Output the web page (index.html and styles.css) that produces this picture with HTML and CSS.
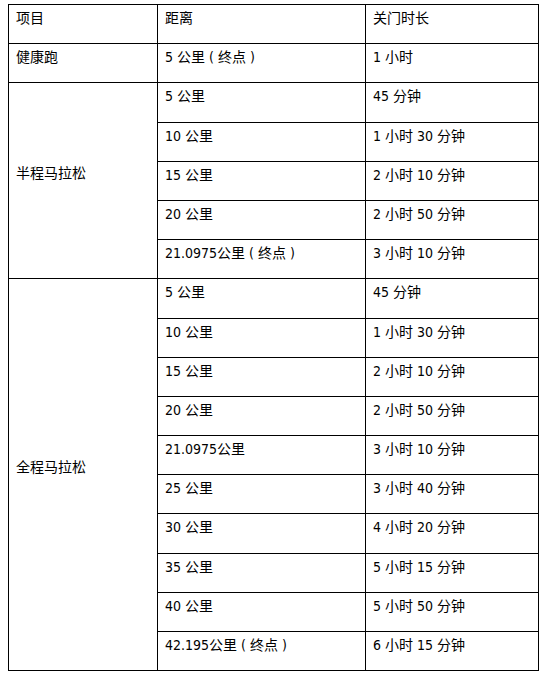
FILE: index.html
```html
<!DOCTYPE html>
<html lang="zh-CN">
<head>
<meta charset="utf-8">
<link rel="stylesheet" href="styles.css">
</head>
<body>
<table class="grid">
  <colgroup><col class="c1"><col class="c2"><col class="c3"></colgroup>
  <tr><td>项目</td><td>距离</td><td>关门时长</td></tr>
  <tr><td>健康跑</td><td>5 公里 ( 终点 )</td><td>1 小时</td></tr>
  <tr><td rowspan="5" class="mid">半程马拉松</td><td>5 公里</td><td>45 分钟</td></tr>
  <tr><td>10 公里</td><td>1 小时 30 分钟</td></tr>
  <tr><td>15 公里</td><td>2 小时 10 分钟</td></tr>
  <tr><td>20 公里</td><td>2 小时 50 分钟</td></tr>
  <tr><td>21.0975公里 ( 终点 )</td><td>3 小时 10 分钟</td></tr>
  <tr><td rowspan="10" class="mid">全程马拉松</td><td>5 公里</td><td>45 分钟</td></tr>
  <tr><td>10 公里</td><td>1 小时 30 分钟</td></tr>
  <tr><td>15 公里</td><td>2 小时 10 分钟</td></tr>
  <tr><td>20 公里</td><td>2 小时 50 分钟</td></tr>
  <tr><td>21.0975公里</td><td>3 小时 10 分钟</td></tr>
  <tr><td>25 公里</td><td>3 小时 40 分钟</td></tr>
  <tr><td>30 公里</td><td>4 小时 20 分钟</td></tr>
  <tr><td>35 公里</td><td>5 小时 15 分钟</td></tr>
  <tr><td>40 公里</td><td>5 小时 50 分钟</td></tr>
  <tr><td>42.195公里 ( 终点 )</td><td>6 小时 15 分钟</td></tr>
</table>
</body>
</html>
```

FILE: styles.css
```css
html, body {
  background: #fff;
}
body {
  margin: 4px 0 0 8px;
  font-family: "DejaVu Sans Condensed", "DejaVu Sans", "Noto Sans CJK SC", sans-serif;
  font-stretch: semi-condensed;
  font-size: 14px;
  color: #000;
}
.grid {
  border-collapse: collapse;
  width: 530px;
  table-layout: fixed;
}
.c1 { width: 149px; }
.c2 { width: 208px; }
.c3 { width: 173px; }
.grid tr { height: 39.2px; }
.grid td {
  border: 1px solid #000;
  padding: 4px 7px 0;
  vertical-align: top;
  line-height: 19px;
  white-space: nowrap;
}
.grid td.mid {
  vertical-align: middle;
  padding-top: 0;
  padding-bottom: 14px;
}
```
